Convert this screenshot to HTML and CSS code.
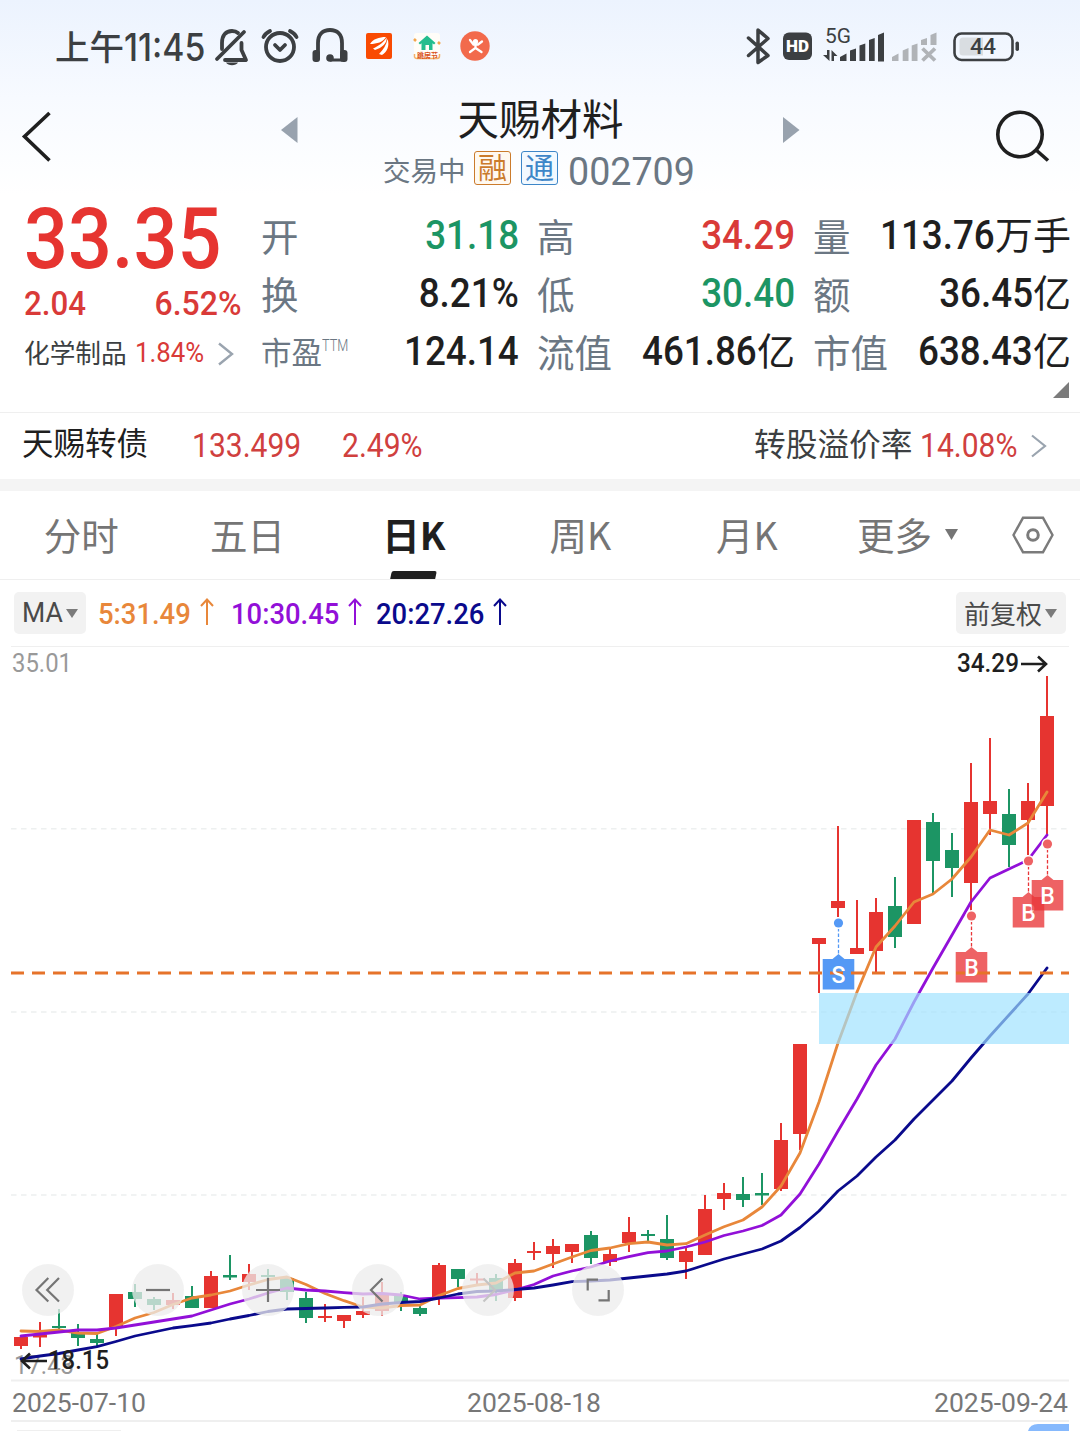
FILE: index.html
```html
<!DOCTYPE html>
<html lang="zh-CN">
<head>
<meta charset="utf-8">
<title>天赐材料 002709</title>
<link rel="stylesheet" href="styles.css">
</head>
<body>
<div class="top">
  <div class="status">
    <div class="clock"><span class="clock-cn">上午</span><span class="clock-num">11:45</span></div>
    <svg class="status-left" width="280" height="92" viewBox="214 0 280 92">
      <g fill="none" stroke="#3c3f42" stroke-width="3.8" stroke-linecap="round" stroke-linejoin="round">
        <path d="M217 59 244 32"/>
        <path d="M222 49V43C222 35 226 31 232 31C234.500 31 236.500 31.600 238 33"/>
        <path d="M241.500 43V50L246 60H225"/>
        <circle cx="280" cy="47" r="14"/>
        <path d="M275 45 280 50 285 45"/>
        <path d="M263.500 37C265 34 267 32.500 270 31M296.500 37C295 34 293 32.500 290 31"/>
        <path d="M318 58V43C318 34 323 30 330 30C337 30 342 34 342 43V58"/>
      </g>
      <path d="M226 62.500H238C236 66 228 66 226 62.500Z" fill="#3c3f42"/>
      <rect x="312.500" y="50" width="7.500" height="12" rx="3" fill="#3c3f42"/>
      <rect x="340" y="50" width="7.500" height="12" rx="3" fill="#3c3f42"/>
      <circle cx="330" cy="58" r="3.800" fill="#3c3f42"/><path d="M330 58.500H342V61.500H330Z" fill="#3c3f42"/>
      <rect x="366" y="33" width="26" height="26" rx="2" fill="#f94a02"/>
      <path d="M370 44C373 39 379 37 386 37C383 42 377 44 370 44Z" fill="#fff"/>
      <path d="M373 48.500C379 46 384 42 386.500 37.500C387.500 43 382 48 375 50Z" fill="#fff"/>
      <path d="M379 54C383 50 386.500 45 387.500 39C390 46 387 52 382 55Z" fill="#fff"/>
      <rect x="414" y="33" width="26" height="26" rx="3" fill="#fffdf8"/>
      <path d="M427 35.500 435.500 43 434 44.500 432.500 43.300V50H429V45H425.500V50H421.500V43.300L420 44.500 418.500 43Z" fill="#24bd8e"/>
      <path d="M414 39 416 41M438 42 440 44" stroke="#f3a64c" stroke-width="2.500"/>
      <path d="M414.500 54V57Q415 58.500 417 58.500H437Q439.500 58.500 439.500 56V54" fill="none" stroke="#f3b06a" stroke-width="1.500"/>
      <text x="417" y="57.500" class="tiny">跳房节</text>
      <circle cx="475" cy="46" r="14.700" fill="#f26a4c"/>
      <circle cx="475.500" cy="41.500" r="2.600" fill="#fff"/>
      <path d="M470 40 473.500 44.500H478L482 41.500M475.500 44V48L470 52M475.500 48 481.500 52" fill="none" stroke="#fff" stroke-width="2.300" stroke-linecap="round"/>
    </svg>
    <svg class="status-right" width="274" height="92" viewBox="746 0 274 92">
      <path d="M748.500 38 768 55.500 758 62.500V30L768 38.500 748.500 55.500" fill="none" stroke="#3c3f42" stroke-width="3.500" stroke-linejoin="round" stroke-linecap="round"/>
      <rect x="783" y="32.500" width="29" height="27.500" rx="6" fill="#3c3f42"/>
      <text x="786" y="52.300" class="hd" textLength="23" lengthAdjust="spacingAndGlyphs">HD</text>
      <text x="825" y="43" class="net" textLength="26" lengthAdjust="spacingAndGlyphs">5G</text>
      <g fill="#3c3f42">
        <path d="M827 50H829.500V61L823 55H827ZM831.500 61V50L837.500 56H834V61Z"/>
        <path d="M840 57 846.500 53.500V61H840ZM850 50.500 856 48.500V61H850ZM859.500 45.500 865.300 43.500V61H859.500ZM869 40 874.700 38V61H869ZM878 35 884 32.500V61.500H878Z"/>
      </g>
      <g fill="#b0b3b7">
        <path d="M892 57 898.500 53.500V61H892ZM902.700 50.500 908.500 48V61H902.700ZM911.700 45.500 917.500 43.500V61H911.700ZM921 40 927 38V45H921ZM930.500 35 936.500 32.500V45H930.500Z"/>
      </g>
      <path d="M922.500 48.500 935 60.500M935 48.500 922.500 60.500" stroke="#b0b3b7" stroke-width="3.800"/>
      <rect x="954.500" y="33.500" width="58" height="26.500" rx="7" fill="none" stroke="#3c3f42" stroke-width="2.600"/>
      <path d="M963 37.500H983V55.500H963Q959.500 55.500 959.500 52V41Q959.500 37.500 963 37.500Z" fill="#d9dde1"/>
      <rect x="1015.500" y="41.500" width="3.500" height="9.500" rx="1.700" fill="#3c3f42"/>
      <text x="970" y="53.800" class="bat" textLength="26" lengthAdjust="spacingAndGlyphs">44</text>
    </svg>
  </div>
  <div class="nav">
    <svg class="back" width="40" height="56" viewBox="16 108 40 56"><path d="M49.500 113 24.500 136.500 49.500 160.500" fill="none" stroke="#1f1f1f" stroke-width="3.600"/></svg>
    <svg class="tri" width="17" height="26" viewBox="0 0 17 26"><path d="M0 13 16.500 0V26Z" fill="#98a2ae"/></svg>
    <div class="title">
      <div class="name">天赐材料</div>
      <div class="sub"><span class="state">交易中</span><span class="badge rong">融</span><span class="badge tong">通</span><span class="code">002709</span></div>
    </div>
    <svg class="tri" width="17" height="26" viewBox="0 0 17 26"><path d="M16.500 13 0 0V26Z" fill="#98a2ae"/></svg>
    <svg class="search" width="60" height="60" viewBox="992 106 60 60"><g fill="none" stroke="#1f1f1f" stroke-width="3.600"><circle cx="1020" cy="134.500" r="22.200"/><path d="M1035.500 149.500 1048 160.500"/></g></svg>
  </div>
</div>

<div class="quote">
  <div class="price-col">
    <div class="price"><span class="num">33.35</span></div>
    <div class="change"><span class="num">2.04</span><span class="num r">6.52%</span></div>
    <div class="industry"><span class="ind-name">化学制品</span><span class="num">1.84%</span><svg width="16" height="24" viewBox="0 0 16 24"><path d="M1 1.500 14 12 1 22.500" fill="none" stroke="#9aa4af" stroke-width="2.400"/></svg></div>
  </div>
  <div class="stats">
    <div class="stat"><span class="lab">开</span><span class="val green"><b class="num">31.18</b></span></div>
    <div class="stat"><span class="lab">高</span><span class="val red"><b class="num">34.29</b></span></div>
    <div class="stat"><span class="lab">量</span><span class="val"><b class="num">113.76</b><i>万手</i></span></div>
    <div class="stat"><span class="lab">换</span><span class="val"><b class="num">8.21%</b></span></div>
    <div class="stat"><span class="lab">低</span><span class="val green"><b class="num">30.40</b></span></div>
    <div class="stat"><span class="lab">额</span><span class="val"><b class="num">36.45</b><i>亿</i></span></div>
    <div class="stat"><span class="lab small">市盈<sup>TTM</sup></span><span class="val"><b class="num">124.14</b></span></div>
    <div class="stat"><span class="lab">流值</span><span class="val"><b class="num">461.86</b><i>亿</i></span></div>
    <div class="stat"><span class="lab">市值</span><span class="val"><b class="num">638.43</b><i>亿</i></span></div>
  </div>
  <svg class="corner" width="16" height="16" viewBox="0 0 16 16"><path d="M16 0V16H0Z" fill="#7b7b7b"/></svg>
</div>

<div class="bond">
  <span class="bond-name">天赐转债</span><span class="num bond-price">133.499</span><span class="num bond-pct">2.49%</span>
  <span class="prem">转股溢价率</span><span class="num prem-pct">14.08%</span>
  <svg width="16" height="24" viewBox="0 0 16 24"><path d="M1 1.500 14 12 1 22.500" fill="none" stroke="#9aa4af" stroke-width="2.200"/></svg>
</div>

<div class="tabs">
  <span class="tab">分时</span><span class="tab">五日</span><span class="tab active">日K</span><span class="tab">周K</span><span class="tab">月K</span>
  <span class="more">更多<svg width="13" height="11" viewBox="0 0 13 11"><path d="M0 0H13L6.500 11Z" fill="#757575"/></svg></span>
  <svg class="gear" width="42" height="38" viewBox="0 0 42 38"><g fill="none" stroke="#7b7b7b" stroke-width="2.400"><path d="M11 1.800H31L40.500 19 31 36.200H11L1.500 19Z"/><circle cx="21" cy="19" r="5.300" stroke-width="3"/></g></svg>
</div>

<div class="ma">
  <span class="pill pill-ma"><span class="ma-word">MA</span><svg width="12" height="9" viewBox="0 0 12 9"><path d="M0 0H12L6 9Z" fill="#7b7b7b"/></svg></span>
  <span class="avg a5"><span class="num">5:31.49</span><svg width="14" height="28" viewBox="0 0 14 28"><path d="M7 27V2M1 8 7 1.500 13 8" fill="none" stroke="currentColor" stroke-width="2"/></svg></span>
  <span class="avg a10"><span class="num">10:30.45</span><svg width="14" height="28" viewBox="0 0 14 28"><path d="M7 27V2M1 8 7 1.500 13 8" fill="none" stroke="currentColor" stroke-width="2"/></svg></span>
  <span class="avg a20"><span class="num">20:27.26</span><svg width="14" height="28" viewBox="0 0 14 28"><path d="M7 27V2M1 8 7 1.500 13 8" fill="none" stroke="currentColor" stroke-width="2"/></svg></span>
  <span class="pill pill-adj">前复权<svg width="12" height="9" viewBox="0 0 12 9"><path d="M0 0H12L6 9Z" fill="#7b7b7b"/></svg></span>
</div>

<div class="chart">
  <svg id="kline" width="1080" height="785" viewBox="0 646 1080 785">
    <g class="rule"><path d="M11 646.500H1069"/><path d="M11 1380.500H1069" class="thick"/><path d="M11 1421H1069" class="thick"/></g>
    <path class="grid" d="M11 828.800H1069M11 1012H1069M11 1195H1069"/>
    <text class="axis" x="12" y="672" textLength="60" lengthAdjust="spacingAndGlyphs">35.01</text>
    <text class="axis" x="14" y="1374" textLength="60" lengthAdjust="spacingAndGlyphs">17.43</text>
    <g id="candles"></g>
    <g id="averages"></g>
    <rect x="819" y="993" width="250" height="51" fill="#9de1ff" fill-opacity=".68"/>
    <g id="flags"></g>
    <path d="M11 973H1069" stroke="#e6732a" stroke-width="2.800" stroke-dasharray="13 8"/>
    <g id="flag-text"></g>
    <text class="mark" x="957" y="672" textLength="62" lengthAdjust="spacingAndGlyphs">34.29</text>
    <path class="arrow" d="M1021 664H1046M1038 656.500 1046 664 1038 671.500"/>
    <text class="mark" x="48" y="1369" textLength="61" lengthAdjust="spacingAndGlyphs">18.15</text>
    <path class="arrow" d="M47 1361H22M30 1353.500 22 1361 30 1368.500"/>
    <text class="date" x="12" y="1412" textLength="134" lengthAdjust="spacingAndGlyphs">2025-07-10</text>
    <text class="date" x="467" y="1412" textLength="134" lengthAdjust="spacingAndGlyphs">2025-08-18</text>
    <text class="date" x="934" y="1412" textLength="134" lengthAdjust="spacingAndGlyphs">2025-09-24</text>
    <path d="M17 1430.500H121" stroke="#efefef" stroke-width="1"/>
    <path d="M1028 1431Q1030 1424 1038 1424H1069V1431Z" fill="#86b9fd"/>
  </svg>
  <div class="controls">
    <span class="ctl"><svg width="52" height="52" viewBox="0 0 52 52"><path d="M26.300 14 14.500 26 26.300 37.500M37 14 25.200 26 37 37.500"/></svg></span>
    <span class="ctl"><svg width="52" height="52" viewBox="0 0 52 52"><path d="M14 26H38"/></svg></span>
    <span class="ctl"><svg width="52" height="52" viewBox="0 0 52 52"><path d="M14 26H38M26 14V38"/></svg></span>
    <span class="ctl"><svg width="52" height="52" viewBox="0 0 52 52"><path d="M30.500 14.500 19 26 30.500 37.500"/></svg></span>
    <span class="ctl off"><svg width="52" height="52" viewBox="0 0 52 52"><path d="M21.500 14.500 33 26 21.500 37.500"/></svg></span>
    <span class="ctl"><svg width="52" height="52" viewBox="0 0 52 52"><path d="M15.700 26.500V15.700H26M26.500 36.300H36.700V26"/></svg></span>
  </div>
</div>
<script src="chart.js"></script>
</body>
</html>
```
FILE: styles.css
```css
* { box-sizing: border-box; }
body {
  margin: 0;
  width: 1080px;
  height: 1431px;
  overflow: hidden;
  background: #fff;
  color: #1f1f1f;
  font-family: "Noto Sans CJK SC", sans-serif;
}
svg { display: block; flex: none; }
span { white-space: nowrap; }
b, i { font-style: normal; font-weight: inherit; }
.num {
  display: inline-block;
  font-family: Roboto, sans-serif;
  transform: scaleX(.92);
  transform-origin: left center;
}

/* header */
.top { height: 195px; background: linear-gradient(#ecf3fe, #f7faff 50%, #fff); }
.status { display: flex; height: 92px; padding-left: 55px; color: #3c3f42; }
.clock { display: flex; width: 159px; line-height: 92px; }
.clock-cn { font-size: 34.500px; font-weight: 500; width: 69px; line-height: 91px; }
.clock-num { font: 500 37.500px/95px Inter, sans-serif; transform: scaleX(.9); transform-origin: left center; }
.status-right { margin-left: 252px; }
.tiny { font-size: 7px; font-weight: 700; fill: #d9521a; }
.hd { font: 900 17px Roboto, sans-serif; fill: #fff; }
.net { font: 400 20px Roboto, sans-serif; fill: #3c3f42; }
.bat { font: 500 22px Roboto, sans-serif; fill: #3c3f42; }

.nav { display: grid; grid-template-columns: 281px 17px 485px 17px 280px; height: 103px; align-items: start; }
.back { margin: 16px 0 0 16px; }
.tri { margin-top: 25px; }
.search { margin: 14px 0 0 192px; }
.name { margin-top: 1px; height: 50px; line-height: 48px; font-size: 41.500px; text-align: center; }
.sub { display: flex; align-items: center; margin-left: 85px; height: 52px; color: #6b7783; }
.state { width: 91px; font-size: 27.500px; line-height: 50px; }
.badge { width: 37px; height: 34px; margin: 1px 10px 4px 0; border: 1.500px solid; border-radius: 3px; font-size: 29px; line-height: 29px; text-align: center; }
.rong { color: #cb7b2c; background: #fff9f1; }
.tong { color: #3d86c8; background: #f2f9ff; }
.code { margin-top: 6px; font: 400 38px/52px Roboto, sans-serif; transform: scaleX(.99); transform-origin: left center; }

/* quote block */
.quote { display: grid; grid-template-columns: 237px 810px; column-gap: 0; padding-left: 24px; height: 218px; border-bottom: 1px solid #efefef; position: relative; }
.price-col { color: #e63430; width: 217px; }
.price { height: 84px; font-size: 85px; font-weight: 500; line-height: 88px; }
.price .num { display: block; line-height: 88px; transform: scaleX(.91); }
.change { display: flex; justify-content: space-between; font-size: 34px; line-height: 48px; font-weight: 500; color: #d93a38; }
.change .r { transform: scaleX(.94); transform-origin: right center; }
.industry { display: flex; align-items: center; height: 50px; font-size: 28px; }
.industry svg { margin: 4px 0 0 9px; }
.industry .num { width: 74px; color: #d93a38; }
.ind-name { width: 111px; font-size: 25.700px; color: #3c3f42; line-height: 48px; }
.stats { display: grid; grid-template-columns: repeat(3, 258px); column-gap: 18px; grid-auto-rows: 58px; padding-top: 12px; }
.stat { display: flex; justify-content: space-between; }
.lab { font-size: 37.500px; line-height: 56px; color: #6b7783; }
.lab.small { font-size: 30.500px; }
.lab sup { display: inline-block; width: 26px; font: 300 17px/17px Roboto, sans-serif; vertical-align: 13px; transform: scaleX(.75); transform-origin: left center; }
.val { display: flex; font-size: 40px; font-weight: 500; line-height: 58px; }
.val .num { transform-origin: right center; }
.val i { font-size: 38px; font-weight: 400; line-height: 51px; }
.red { color: #d93a38; }
.green { color: #1c9564; }
.corner { position: absolute; right: 11px; bottom: 14px; }

/* convertible bond strip */
.bond { display: flex; align-items: center; height: 78px; padding: 0 0 12px 22px; border-bottom: 12px solid #f4f4f4; font-size: 31.500px; }
.bond .num { font-size: 33px; color: #d0403e; margin-top: 10px; transform: scaleX(.91); }
.bond svg { margin-top: 12px; }
.bond-name { width: 170px; margin-top: 1px; }
.bond-price { width: 150px; }
.bond-pct { width: 412px; }
.prem { width: 166px; margin-top: 4px; font-size: 31.700px; color: #3c3f42; }
.prem-pct { width: 111px; }

/* period tabs */
.tabs { display: flex; height: 89px; border-bottom: 1px solid #efefef; font-size: 37.500px; line-height: 85px; color: #757575; }
.tab { width: 166.400px; padding-right: 4px; text-align: center; }
.active { position: relative; color: #1f1f1f; font-weight: 700; }
.active::after { content: ""; position: absolute; left: 58px; bottom: 0; width: 45px; height: 8px; background: #1f1f1f; border-radius: 2px 2px 0 0; transform: skewX(-12deg); }
.more { display: flex; margin-left: 25px; width: 155px; }
.more svg { margin: 38px 0 0 13px; }
.gear { margin-top: 25px; }

/* moving averages legend */
.ma { display: flex; align-items: center; height: 66px; padding-left: 14px; }
.pill { display: flex; align-items: center; height: 42px; border-radius: 5px; background: #f2f2f2; color: #4a4a4a; }
.pill-ma { width: 72px; padding-left: 8px; margin-right: 12px; }
.ma-word { width: 44px; font: 400 28px/44px Roboto, sans-serif; transform: scaleX(.95); transform-origin: left center; }
.pill-adj { width: 110px; padding-left: 8px; font-size: 26px; line-height: 38px; }
.pill-adj svg { margin-left: 3px; }
.avg { display: flex; align-items: center; font-size: 29px; font-weight: 500; }
.avg .num { transform: scaleX(.945); line-height: 36px; padding-top: 2px; }
.avg svg { margin-bottom: 2px; }
.a5 { width: 133px; color: #e8873a; }
.a5 .num { width: 102px; }
.a10 { width: 145px; color: #9210d8; }
.a10 .num, .a20 .num { width: 117px; }
.a20 { width: 580px; color: #0a0a8c; }

/* candlestick chart */
.chart { position: relative; height: 785px; }
.rule { stroke: #efefef; stroke-width: 1; }
.thick { stroke-width: 2; }
.grid { stroke: #edf0f0; stroke-width: 1.600; stroke-dasharray: 5.500 4.500; }
.axis, .mark, .date { font: 400 25px Roboto, sans-serif; fill: #999; }
.mark { font-weight: 500; fill: #1f1f1f; }
.date { font-size: 26px; fill: #777; }
.arrow { fill: none; stroke: #1f1f1f; stroke-width: 2.600; }
.up { fill: #e63430; stroke: #e63430; }
.down { fill: #1c9564; stroke: #1c9564; }
.wick { stroke-width: 2; }
.body { stroke: none; }
.avg-line { fill: none; stroke-width: 2.800; stroke-linejoin: round; stroke-linecap: round; }
.flag-letter { font: 500 23px Roboto, sans-serif; fill: #fff; text-anchor: middle; }
.controls { position: absolute; left: 22px; top: 618px; display: flex; gap: 58px; }
.ctl { width: 52px; height: 52px; border-radius: 50%; background: rgba(236, 236, 236, .75); }
.ctl path { fill: none; stroke: #757575; stroke-width: 2.200; }
.off path { stroke: #c4c4c4; }
```
FILE: chart.js
```js
// One row per trading day: direction, high, body top, body bottom, low (chart units).
const days = [
  ["u",1337,1337,1346,1349],["u",1322,1334.5,1337.5,1347],["d",1309,1326,1328,1333],["d",1324,1333,1338,1346],
  ["d",1334,1339,1343,1346],["u",1294,1294,1327,1336],["d",1284,1292,1299,1307],["d",1297,1299,1305,1310],
  ["u",1293,1300,1305,1309],["d",1286,1296,1308,1308],["u",1271,1276,1308,1308],["d",1255,1275,1277.5,1280],
  ["u",1264,1274,1282,1290],["d",1269,1275,1277,1280],["d",1278,1278,1292,1300],["d",1292,1298,1318,1323],
  ["u",1304,1316,1318,1322],["u",1315,1315,1321,1328],["u",1297,1311,1315,1318],["u",1282,1294,1311,1316],
  ["d",1292,1296,1303,1311],["d",1305,1308,1314,1316],["u",1263,1265,1297,1305],["d",1269,1269,1279,1287],
  ["u",1273,1278.5,1280.5,1284],["d",1274,1278,1292,1301],["u",1259,1263,1298,1301],["u",1242,1251,1253,1260],
  ["u",1239,1246,1254,1268],["u",1244,1244,1252,1263],["d",1231,1235,1258,1264],["u",1249,1254,1262,1266],
  ["u",1217,1232,1243,1252],["d",1230,1234,1236,1241],["d",1215,1239,1258,1260],["u",1248,1251,1262,1279],
  ["u",1195,1209,1255,1255],["u",1183,1193,1199,1210],["d",1177,1194,1200,1207],["d",1173,1193,1195.5,1205],
  ["u",1123,1140,1189,1191],["u",1044,1044,1134,1150],["u",938,938,944,993],["u",826,901,908,917],
  ["u",900,948,954,954],["u",898,912,951,973],["d",877,906,937,948],["u",820,820,924,924],
  ["d",813,822,861,894],["d",833,850,868,897],["u",763,802,883,912],["u",738,801,814,835],
  ["d",789,814,845,867],["u",783,801,820,855],["u",676,716,806,835]
];

const averages = {
  "#e8873a": [1331,1331.5,1330,1333,1333.5,1326.5,1318,1312.5,1304.5,1298,1295,1291,1285,1279.5,1277,1284.5,1293.5,1300.7,1307,1308,1305.5,1305,1295.5,1288.5,1285,1283,1273,1271,1264,1257,1250.5,1248,1243.7,1242,1245,1243.7,1235,1226.7,1220,1207,1186,1153,1102,1043,992,947,926,902,894,879,857,830,835,823,792],
  "#9210d8": [1336,1334,1332,1330,1330,1328,1325,1322,1319,1316,1310,1304,1299,1293,1288,1290,1291,1292.7,1294,1293.5,1295,1299,1298,1297.7,1297,1294.5,1290,1284.5,1276,1271,1267,1261,1256.7,1252.7,1251,1247,1242,1235.5,1231,1225.5,1215,1194,1164,1131,1099,1065,1039,1002,968,935,902,878,869,860,835],
  "#0a0a8c": [1359,1356,1353.5,1350,1346.7,1341.5,1336,1332,1328,1325.7,1323,1319,1315.5,1311.5,1309,1308.5,1308,1307.3,1307,1304,1302.5,1301.5,1298,1294,1291.5,1291,1289.5,1288,1285,1281.7,1281,1280,1278,1276,1274,1271,1265,1259,1254,1249,1241,1227.5,1211,1191,1176,1157,1140,1119,1100,1081,1058,1036,1015,994,968]
};

// letter, centre x, dot y, flag tip y, colour, opacity
const flags = [
  ["S",838.5,923,954,"#5499f5",1],
  ["B",971.5,916,947,"#e93639",.78],
  ["B",1028.5,861,892,"#e93639",.78],
  ["B",1047.5,844,875,"#e93639",.78]
];
const COST_LINE = 973;

const x = i => 21 + 19 * i;
const crossesCost = tip => tip < COST_LINE && tip + 36 > COST_LINE;
const letterMark = (letter, cx, tip) => `<text class="flag-letter" x="${cx}" y="${tip + 28.5}">${letter}</text>`;

document.getElementById("candles").innerHTML = days.map(([dir, hi, top, bot, lo], i) => {
  const cls = dir === "u" ? "up" : "down";
  return `<g class="${cls}"><path class="wick" d="M${x(i)} ${hi}V${lo}"/><rect class="body" x="${x(i) - 7}" y="${top}" width="14" height="${bot - top}"/></g>`;
}).join("");

document.getElementById("averages").innerHTML = Object.entries(averages).map(([color, ys]) =>
  `<polyline class="avg-line" stroke="${color}" points="${ys.map((y, i) => x(i) + "," + y).join(" ")}"/>`
).join("");

document.getElementById("flags").innerHTML = flags.map(([letter, cx, dot, tip, color, alpha]) =>
  `<path d="M${cx} ${dot + 5}V${tip}" stroke="${color}" stroke-width="1.3" stroke-dasharray="3.5 2"/>
   <circle cx="${cx}" cy="${dot}" r="6" fill="#fff"/><circle cx="${cx}" cy="${dot}" r="4.6" fill="${color}" fill-opacity="${alpha}"/>
   <path d="M${cx} ${tip}l6 5h9.800v30.500h-31.600v-30.500h9.800z" fill="${color}" fill-opacity="${alpha}"/>
   ${crossesCost(tip) ? "" : letterMark(letter, cx, tip)}`
).join("");

// Letters on flags crossed by the cost line sit above that line.
document.getElementById("flag-text").innerHTML = flags
  .filter(([, , , tip]) => crossesCost(tip))
  .map(([letter, cx, , tip]) => letterMark(letter, cx, tip))
  .join("");
```
